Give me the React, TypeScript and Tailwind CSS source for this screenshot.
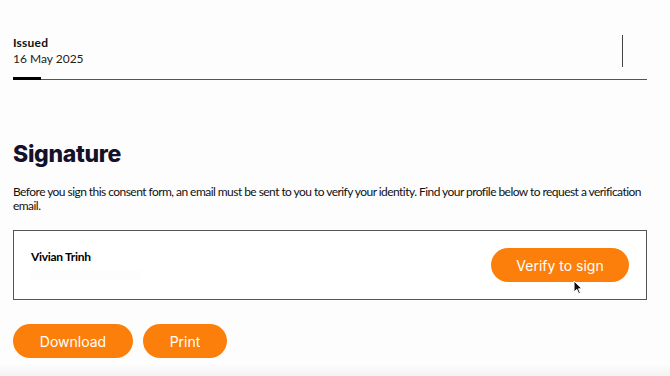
import React from 'react';

const bodyFont = { fontFamily: 'Lato, "Open Sans", sans-serif' };
const btnFont = { fontFamily: 'Inter, "Open Sans", sans-serif' };

const App: React.FC = () => {
  return (
    <div className="relative h-[376px] w-[670px] overflow-hidden bg-[#fdfdfd] text-[#111]" style={bodyFont}>
      <div className="pl-[13px] pr-[23px] pt-[34px]">
        {/* Issued header */}
        <div className="flex items-start justify-between">
          <div className="pt-[1px]">
            <p className="text-[12px] font-bold leading-[16px] tracking-[0.2px] text-[#111]">Issued</p>
            <p className="text-[12px] leading-[16px] text-[#222]">16 May 2025</p>
          </div>
          <div className="mr-[24px] mt-[1px] h-[32px] w-px bg-[#444]" />
        </div>
        <div className="relative mt-[12px] h-px w-full bg-[#555]">
          <div className="absolute bottom-0 left-0 h-[3px] w-[28px] bg-black" />
        </div>

        {/* Signature */}
        <h1
          className="mt-[60px] text-[23px] font-extrabold leading-[28px] tracking-[-0.3px] text-[#14112a]"
          style={btnFont}
        >
          Signature
        </h1>
        <p className="mt-[17px] text-[12px] leading-[14px] tracking-[-0.55px] text-[#111]">
          Before you sign this consent form, an email must be sent to you to verify your identity. Find your profile below to request a verification email.
        </p>

        <div className="relative mt-[17px] flex h-[70px] items-center justify-between border border-[#555] bg-white pl-[17px] pr-[17px]">
          <div className="self-start pt-[19px]">
            <p className="text-[12px] font-bold leading-[14px] tracking-[-0.3px] text-black">Vivian Trinh</p>
            <div className="mt-[6px] h-[10px] w-[110px] bg-[#fdfdfd]" />
          </div>
          <button className="h-[34px] w-[138px] rounded-full bg-[#fd7f0b] text-[14px] text-white" style={btnFont}>
            Verify to sign
          </button>
          {/* mouse cursor */}
          <svg className="absolute left-[559px] top-[49px]" width="10" height="15" viewBox="0 0 10 15">
            <path d="M1 1 L1 12 L3.8 9.4 L5.8 13.8 L7.4 13 L5.5 8.8 L9 8.8 Z" fill="#111" stroke="#fff" strokeWidth="1" />
          </svg>
        </div>

        <div className="mt-[24px] flex gap-[10px]" style={btnFont}>
          <button className="h-[34px] w-[120px] rounded-full bg-[#fd7f0b] text-[14px] text-white">Download</button>
          <button className="h-[34px] w-[84px] rounded-full bg-[#fd7f0b] text-[14px] text-white">Print</button>
        </div>
      </div>
      <div className="absolute bottom-0 left-0 h-[12px] w-full bg-gradient-to-b from-[#fdfdfd] to-[#f3f3f3]" />
    </div>
  );
};

export default App;
